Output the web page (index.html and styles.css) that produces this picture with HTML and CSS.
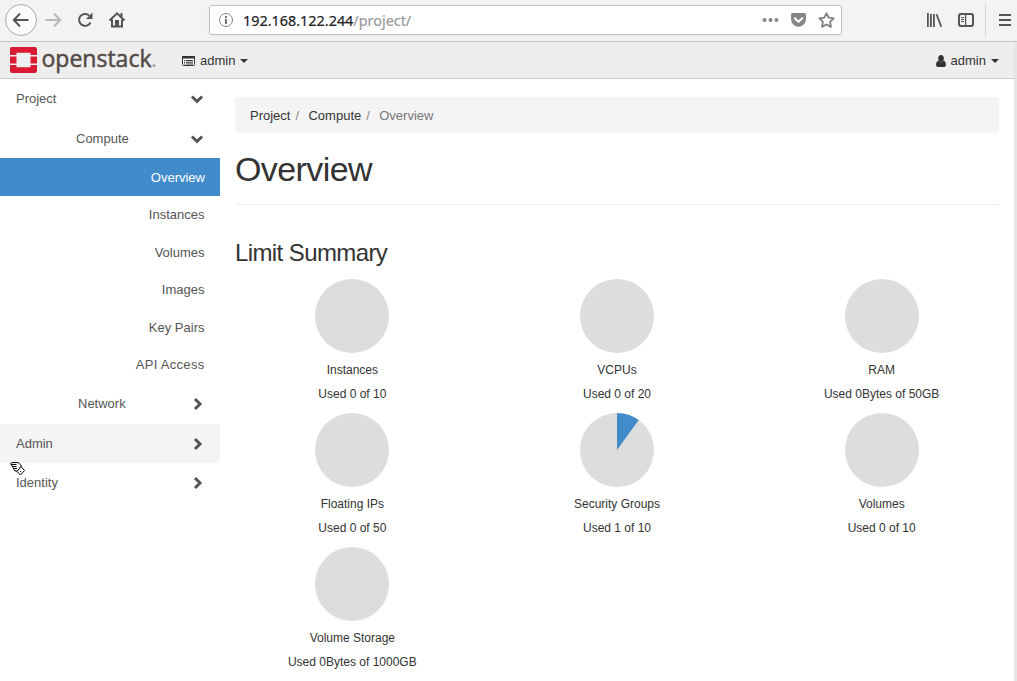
FILE: index.html
```html
<!DOCTYPE html>
<html lang="en">
<head>
<meta charset="UTF-8">
<title>Overview - OpenStack Dashboard</title>
<link rel="stylesheet" href="styles.css">
</head>
<body>
<!-- browser toolbar -->
<div class="toolbar">
  <div class="nav-buttons">
    <svg width="130" height="41" viewBox="0 0 130 41" fill="none" stroke="#555" stroke-width="2">
      <circle cx="21" cy="20" r="15.5" fill="#fbfbfb" stroke="#a9a9a7" stroke-width="1"/>
      <path d="M28.500 20H14.500M20 13.500L13.800 20L20 26.500"/>
      <path stroke="#b7b7b5" d="M45.500 20H60M54 13.500L60.200 20L54 26.500"/>
      <path d="M89.300 15.600A6 6 0 1 0 90.500 22.500"/>
      <path fill="#555" stroke="none" d="M92.500 12.500V19H86Z"/>
      <path d="M109.500 20.500L117 13.300L124.500 20.500M112 19.500V26.500H122V19.500M121.500 13V17"/>
      <path fill="#555" stroke="none" d="M115 20h4v7h-4z"/>
    </svg>
  </div>
  <div class="url-bar">
    <svg width="16" height="16" viewBox="0 0 16 16">
      <circle cx="8" cy="8" r="6.500" fill="none" stroke="#858585"/>
      <path fill="#777" d="M7 4h2v2H7zM7 7h2v5H7z"/>
    </svg>
    <span class="url">192.168.122.244<span class="url-path">/project/</span></span>
    <svg class="url-actions" width="76" height="20" viewBox="0 0 76 20" fill="#868686">
      <circle cx="4.500" cy="10" r="2"/><circle cx="10.500" cy="10" r="2"/><circle cx="16.500" cy="10" r="2"/>
      <path d="M32.500 3h12q1.500 0 1.500 1.500v4.500a7.500 7.700 0 0 1-15 0V4.500q0-1.500 1.500-1.500z"/>
      <path fill="none" stroke="#fff" stroke-width="2" stroke-linecap="round" stroke-linejoin="round" d="M34.800 8.200L38.500 11.700L42.200 8.200"/>
      <path fill="none" stroke="#808080" stroke-width="1.800" stroke-linejoin="round" d="M66.500 3.200L68.700 7.700L73.700 8.400L70.100 11.900L71 16.900L66.500 14.500L62 16.900L62.900 11.900L59.300 8.400L64.300 7.700Z"/>
    </svg>
  </div>
  <svg class="menu-buttons" width="97" height="41" viewBox="0 0 97 41" fill="none" stroke="#555" stroke-width="2">
    <path stroke-width="1.800" d="M7.900 13V27M10.900 14V27M13.900 14V27M16.500 14.300L21.300 26.800"/>
    <rect x="39" y="14" width="14" height="12" rx="2"/>
    <path stroke-width="1.300" d="M45.600 14V26"/>
    <path stroke-width="1" d="M41 17.500h3M41 19.500h3M41 21.500h3"/>
    <path stroke="#d6d5d2" stroke-width="1" d="M65.500 4V36"/>
    <path d="M79 15H91M79 20H91M79 25H91"/>
  </svg>
</div>

<div class="viewport">
  <div class="page">
    <div class="navbar">
      <svg class="logo" width="152" height="36" viewBox="0 0 152 36">
        <path fill="#da1a32" d="M1.500 5h23.500q2 0 2 2v6h-6.500v-2.300H6.500V13H0V6.500Q0 5 1.500 5zM0 14.500h6.500v7H0zM20.500 14.500H27v7h-6.500zM0 23h6.500v2.300h14V23H27v6q0 2-2 2H2q-2 0-2-2z"/>
        <text class="logo-text" x="31.500" y="24.800" textLength="110" lengthAdjust="spacingAndGlyphs">openstack</text>
        <circle cx="144" cy="23.500" r="1.600" fill="#aaa"/>
      </svg>
      <div class="dropdown">
        <svg width="13" height="10" viewBox="0 0 13 10">
          <rect x=".5" y=".5" width="12" height="9" rx="1" fill="#fff" stroke="#333"/>
          <path fill="#333" d="M0 0h13v2.500H0zM2 4h1v1H2zM4 4h7v1H4zM2 5.700h1v1H2zM4 5.700h7v1H4zM2 7.400h1v1H2zM4 7.400h7v1H4z"/>
        </svg>
        <span>admin</span>
        <b class="caret"></b>
      </div>
      <div class="dropdown user">
        <svg width="10" height="12" viewBox="0 0 10 12" fill="#333">
          <ellipse cx="5" cy="3.500" rx="2.800" ry="3.500"/>
          <path d="M2 5.500Q5 9 8 5.500Q10 6.500 10 10Q10 12 8 12H2Q0 12 0 10Q0 6.500 2 5.500Z"/>
        </svg>
        <span>admin</span>
        <b class="caret"></b>
      </div>
    </div>

    <div class="main">
      <div class="sidebar">
        <div class="panel">Project
          <svg class="chevron" width="14" height="14" viewBox="0 0 14 14"><path d="M2 4.500L7 9.500L12 4.500"/></svg>
        </div>
        <div class="panel group"><span>Compute</span>
          <svg class="chevron" width="14" height="14" viewBox="0 0 14 14"><path d="M2 4.500L7 9.500L12 4.500"/></svg>
        </div>
        <div class="item active">Overview</div>
        <div class="item">Instances</div>
        <div class="item">Volumes</div>
        <div class="item">Images</div>
        <div class="item">Key Pairs</div>
        <div class="item api">API Access</div>
        <div class="panel group network"><span>Network</span>
          <svg class="chevron" width="14" height="14" viewBox="0 0 14 14"><path d="M5 2L10 7L5 12"/></svg>
        </div>
        <div class="panel low hover">Admin
          <svg class="chevron" width="14" height="14" viewBox="0 0 14 14"><path d="M5 2L10 7L5 12"/></svg>
        </div>
        <div class="panel low">Identity
          <svg class="chevron" width="14" height="14" viewBox="0 0 14 14"><path d="M5 2L10 7L5 12"/></svg>
        </div>
      </div>

      <div class="content">
        <div class="breadcrumb">
          <span>Project</span><i>/</i><span>Compute</span><i>/</i><span class="current">Overview</span>
        </div>
        <h1>Overview</h1>
        <h3>Limit Summary</h3>
        <div class="quotas">
          <div class="quota">
            <div class="pie"></div>
            <div>Instances</div>
            <div>Used 0 of 10</div>
          </div>
          <div class="quota">
            <div class="pie"></div>
            <div>VCPUs</div>
            <div>Used 0 of 20</div>
          </div>
          <div class="quota">
            <div class="pie"></div>
            <div>RAM</div>
            <div>Used 0Bytes of 50GB</div>
          </div>
          <div class="quota">
            <div class="pie"></div>
            <div>Floating IPs</div>
            <div>Used 0 of 50</div>
          </div>
          <div class="quota">
            <div class="pie">
              <!-- 10% slice -->
              <svg width="74" height="74" viewBox="0 0 74 74"><path fill="#428bca" d="M37 37V0A37 37 0 0 1 58.750 7.070Z"/></svg>
            </div>
            <div>Security Groups</div>
            <div>Used 1 of 10</div>
          </div>
          <div class="quota">
            <div class="pie"></div>
            <div>Volumes</div>
            <div>Used 0 of 10</div>
          </div>
          <div class="quota">
            <div class="pie"></div>
            <div>Volume Storage</div>
            <div>Used 0Bytes of 1000GB</div>
          </div>
        </div>
      </div>
    </div>
  </div>
  <div class="scrollbar"></div>
</div>

<!-- mouse pointer -->
<svg class="cursor" width="16" height="15" viewBox="0 0 16 15">
  <path fill="#fff" stroke="#000" d="M.500 1.500L2 .600H8.500L11.500 4L7.500 9H5L4 7.500L3 5.500L1.500 3Z"/>
  <path fill="none" stroke="#000" d="M1 2.500H6.500M3 4.500H6.500M4 6.500H7"/>
  <path fill="#fff" stroke="#000" d="M11 4.500L14.500 8.500L10.500 13L7 9.500Z"/>
  <path fill="#000" d="M10 9h1v1h-1z"/>
</svg>
</body>
</html>
```

FILE: styles.css
```css
* {
  box-sizing: border-box;
}

body {
  margin: 0;
  height: 681px;
  overflow: hidden;
  background: #fff;
  color: #333;
  font-family: "Liberation Sans", Helvetica, Arial, sans-serif;
  font-size: 13px;
  line-height: 18px;
}

svg {
  display: block;
  flex: none;
}

/* browser toolbar */
.toolbar {
  display: flex;
  align-items: center;
  height: 42px;
  background: #f4f3f1;
  border-bottom: 1px solid #c4c3c1;
}

.nav-buttons {
  width: 209px;
}

.url-bar {
  display: flex;
  align-items: center;
  width: 633px;
  height: 30px;
  margin-bottom: 1px;
  padding: 0 5px 0 8px;
  background: #fff;
  border: 1px solid #c2c1bf;
  border-radius: 3px;
  box-shadow: 0 1px 3px rgba(0, 0, 0, .06);
}

.url {
  margin-left: 9px;
  padding-top: 1px;
  color: #222;
  font-family: "Noto Sans", sans-serif;
  font-size: 14.400px;
  white-space: nowrap;
  -webkit-text-stroke: .2px;
}

.url-path {
  color: #999;
}

.url-actions {
  margin-left: auto;
}

.menu-buttons {
  margin-left: auto;
}

.viewport {
  display: flex;
  height: 639px;
}

.page {
  width: 1014px;
}

.scrollbar {
  width: 3px;
  background: #e5e5e5;
}

/* navbar */
.navbar {
  display: flex;
  align-items: center;
  height: 37px;
  padding: 0 15px 0 10px;
  background: #eee;
  border-bottom: 1px solid #ccc;
}

.logo-text {
  fill: #534a45;
  stroke: #534a45;
  stroke-width: .5px;
  font-family: "Open Sans", sans-serif;
  font-size: 24px;
}

.dropdown {
  display: flex;
  align-items: center;
  gap: 5px;
  margin-left: 20px;
  padding-top: 1px;
}

.user {
  margin-left: auto;
}

.caret {
  border-top: 4px solid #333;
  border-left: 4px solid transparent;
  border-right: 4px solid transparent;
}

.main {
  display: flex;
}

/* sidebar */
.sidebar {
  width: 220px;
  color: #555;
}

.panel {
  display: flex;
  align-items: center;
  justify-content: space-between;
  height: 39px;
  padding: 0 16px;
  border-radius: 4px;
}

.group {
  height: 40px;
  padding-top: 1px;
  padding-left: 76px;
}

.network {
  padding-top: 0;
  padding-left: 78px;
}

.low {
  padding-top: 1px;
}

.hover {
  background: #f4f4f4;
}

.chevron {
  fill: none;
  stroke: #555;
  stroke-width: 3px;
}

.item {
  height: 37.500px;
  padding-right: 15.500px;
  line-height: 37.500px;
  text-align: right;
}

.item.active {
  height: 38px;
  padding-right: 15px;
  line-height: 39px;
  background: #428bca;
  color: #fff;
}

.item.api {
  letter-spacing: .3px;
}

/* content */
.content {
  width: 794px;
  padding: 18px 15px 0;
}

.breadcrumb {
  display: flex;
  height: 36px;
  padding: 0 15px;
  line-height: 37px;
  background: #f4f4f4;
  border-radius: 4px;
}

.breadcrumb i {
  width: 18px;
  padding-left: 5px;
  color: #888;
  font-style: normal;
}

.breadcrumb .current {
  color: #777;
}

h1,
h3 {
  margin: 0;
  font-weight: normal;
}

h1 {
  height: 72px;
  font-size: 34px;
  line-height: 72px;
  letter-spacing: -.6px;
  border-bottom: 1px solid #eee;
}

h3 {
  margin-top: 33px;
  font-size: 24px;
  line-height: 30px;
  letter-spacing: -.6px;
}

.quotas {
  display: grid;
  grid-template-columns: repeat(3, 1fr);
  margin: 11px -15px 0;
}

.quota {
  height: 134px;
  font-size: 12px;
  line-height: 24px;
  text-align: center;
}

.pie {
  width: 74px;
  height: 74px;
  margin: 0 auto 5px;
  background: #ddd;
  border-radius: 50%;
}

.cursor {
  position: absolute;
  left: 10px;
  top: 462px;
}
```
